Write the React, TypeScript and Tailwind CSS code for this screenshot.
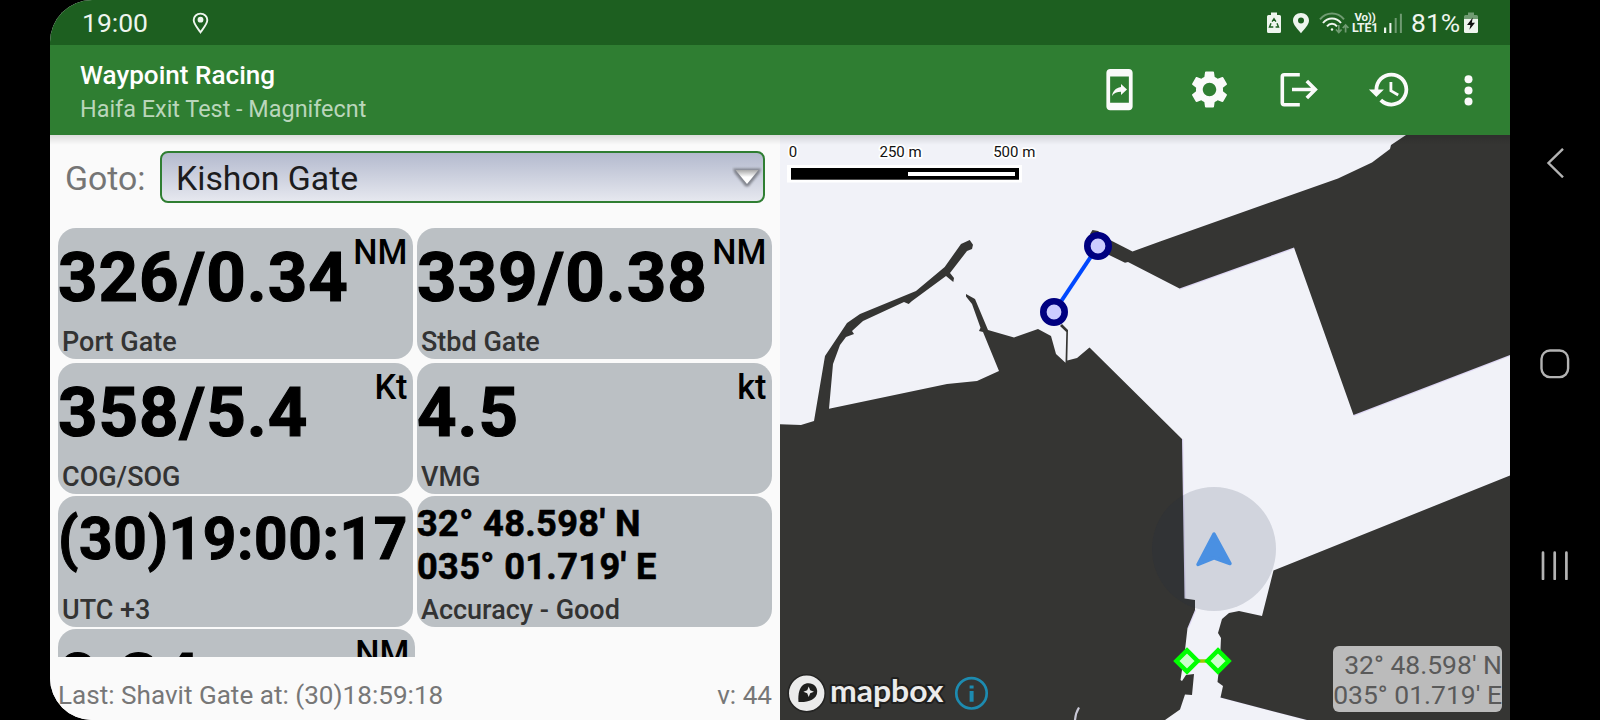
import type { ReactNode } from "react";
import { MdHistory, MdMobileScreenShare, MdSettings } from "react-icons/md";

function StatusBar() {
  return (
    <div className="flex h-[45px] shrink-0 items-center bg-[#1d5f20] pl-8 text-[26.5px] leading-[46px] text-[#eef5ee]">
      <span className="w-[110px]">19:00</span>
      <svg className="h-[22px] w-[17px]" viewBox="0 0 17 22" fill="none">
        <path d="M8.5 1.6C4.7 1.6 1.7 4.4 1.7 8.1c0 4.2 4.6 8.9 6.8 12.1 2.200-3.200 6.800-7.900 6.800-12.100C15.300 4.400 12.300 1.600 8.500 1.600Z" stroke="#eef5ee" strokeWidth="1.9" />
        <circle cx="8.500" cy="7.700" r="2.900" fill="#eef5ee" />
      </svg>
      <div className="ml-auto flex items-center pr-8">
        <svg className="h-6 w-[14px]" viewBox="0 0 14 24">
          <path d="M4 1.500h6V4H12.500Q14 4 14 5.500V20.500Q14 22 12.500 22H1.500Q0 22 0 20.500V5.500Q0 4 1.500 4H4Z" fill="#eef5ee" />
          <path d="M5.100 10.600 7 7.800l1.900 2.800M10 12.300l1.500 3.700H8.600M6.300 16H2.500L4 12.300" stroke="#1d5f20" strokeWidth="1.400" fill="none" />
        </svg>
        <svg className="ml-3 h-6 w-4" viewBox="0 0 16 24">
          <path fillRule="evenodd" d="M8 2C3.600 2 0 5.200 0 9.400 0 13.800 5 18.200 8 22.200c3-4 8-8.400 8-12.800C16 5.200 12.400 2 8 2Zm0 4.400a3 3 0 1 1 0 6 3 3 0 0 1 0-6Z" fill="#eef5ee" />
        </svg>
        <svg className="ml-[10px] h-6 w-[31px]" viewBox="0 0 31 24" fill="none" stroke="#eef5ee" strokeWidth="2">
          <path d="M1 8.300C7.500 .6 18.500 .6 25 8.300" opacity=".4" />
          <path d="M4 12c4.800-6 13.200-6 18 0M8 15.300c2.800-3.400 7.200-3.400 10 0" />
          <circle cx="13" cy="18.500" r="1.200" fill="#eef5ee" stroke="none" />
          <path d="M19.800 14v7M17 18.500l2.800 3 2.800-3M26.600 21.500v-7M23.800 17l2.800-3 2.800 3" opacity=".4" strokeWidth="1.700" />
        </svg>
        <div className="ml-[2px] w-[26px] text-center font-bold tracking-[-0.2px]">
          <div className="text-[11.5px] leading-[11px]">Vo))</div>
          <div className="text-[12.3px] leading-[11px]">LTE1</div>
        </div>
        <svg className="ml-[5px] h-6 w-[20px]" viewBox="0 0 20 24" fill="#eef5ee">
          <path d="M1 16.500h2.200V22H1zM6.400 12h2v10h-2z" />
          <path d="M11.700 7h2v15h-2zM16.900 2.800h2V22h-2z" opacity=".4" />
        </svg>
        <span className="ml-2 w-[53px]">81%</span>
        <svg className="h-6 w-[14px]" viewBox="0 0 14 24">
          <path d="M4 1.500h6V4H12.500Q14 4 14 5.500V8H0V5.500Q0 4 1.500 4H4Z" fill="#eef5ee" opacity=".4" />
          <path d="M0 8H14V20.500Q14 22 12.500 22H1.500Q0 22 0 20.500Z" fill="#eef5ee" />
          <path d="M8.800 6.500 3 14h3.400l-1 4.800L11 11.800H7.800Z" fill="#111" />
        </svg>
      </div>
    </div>
  );
}

function AppBar() {
  return (
    <div className="flex h-[90px] shrink-0 items-start bg-[#2f7e32] pl-[30px] pr-[35px] text-[#fafafa]">
      <div className="pt-[15px]">
        <h1 className="text-[26.1px] leading-[30px] font-medium text-white">Waypoint Racing</h1>
        <p className="mt-[2px] text-[23.4px] leading-[34px] text-[#bad6bb]">Haifa Exit Test - Magnifecnt</p>
      </div>
      <div className="ml-auto flex items-center gap-[45px] pt-[22px]">
        <MdMobileScreenShare size={45} />
        <MdSettings size={45} />
        <svg className="size-[45px]" viewBox="0 0 45 45" fill="none" stroke="currentColor" strokeWidth="3.600">
          <path d="M22.800 7.800H7.200Q5.300 7.800 5.300 9.700V35.800Q5.300 37.700 7.200 37.700H22.800M15 22.500H39M29.800 14l8.500 8.500-8.500 8.500" />
        </svg>
        <MdHistory size={45} />
        <svg className="h-[45px] w-[18px]" viewBox="0 0 18 45" fill="currentColor">
          <circle cx="11.500" cy="12.300" r="4" />
          <circle cx="11.500" cy="23.500" r="4" />
          <circle cx="11.500" cy="34.600" r="4" />
        </svg>
      </div>
    </div>
  );
}

function Tile({ children, unit, label, wide }: { children: ReactNode; unit?: string; label?: string; wide?: boolean }) {
  return (
    <div className={`h-[131px] overflow-hidden rounded-[18px] bg-[#bbc0c4] whitespace-nowrap ${wide ? "w-[357px]" : "w-[355px]"}`}>
      <div className="flex h-[99px] justify-between text-black">
        {children}
        {unit && <span className="pr-[5.5px] text-[34.200px] leading-[49px] font-medium">{unit}</span>}
      </div>
      {label && <div className="pl-1 text-[27px] leading-[31px] font-medium text-[#333]">{label}</div>}
    </div>
  );
}

function Big({ children }: { children: ReactNode }) {
  return <span className="text-[69px] leading-[99px] font-bold tracking-[0.95px] [-webkit-text-stroke:1.2px_#000]">{children}</span>;
}

function Dashboard() {
  return (
    <div className="flex w-[730px] shrink-0 flex-col bg-[#fafafa] px-2 pt-4">
      <div className="flex h-[52px] items-center pl-[7px] text-[33.8px] leading-[54px]">
        <span className="w-[95px] pt-[3px] text-[#757575]">Goto:</span>
        <div className="flex h-[52px] w-[605px] items-center rounded-[8px] border-2 border-[#2f7e32] bg-linear-to-b from-[#b4bace] to-[#e6e8ef] pl-[14px] text-[#1c1c1e]">
          <span className="pt-[3px]">Kishon Gate</span>
          <svg className="mt-px mr-px ml-auto h-6 w-[30px]" viewBox="0 0 30 24">
            <defs>
              <linearGradient id="arrow-shade" x1="0" y1="0" x2="0" y2="1">
                <stop offset="0" stopColor="#a8a8a8" />
                <stop offset=".5" stopColor="#ffffff" />
              </linearGradient>
              <filter id="arrow-blur" x="-20%" y="-20%" width="140%" height="140%">
                <feGaussianBlur stdDeviation="1.100" />
              </filter>
            </defs>
            <path d="M1 2.500H29L27.500 7 16.500 20.500H13.500L2.500 7Z" fill="#6f727a" opacity=".8" filter="url(#arrow-blur)" />
            <path d="M3.500 4H26.500L15 18Z" fill="url(#arrow-shade)" />
          </svg>
        </div>
      </div>
      <div className="mt-[25px] h-[429px] overflow-hidden">
        <div className="flex gap-1">
          <Tile unit="NM" label="Port Gate"><Big>326/0.34</Big></Tile>
          <Tile unit="NM" label="Stbd Gate"><Big>339/0.38</Big></Tile>
        </div>
        <div className="mt-1 flex gap-1">
          <Tile unit="Kt" label="COG/SOG"><Big>358/5.4</Big></Tile>
          <Tile unit="kt" label="VMG"><Big>4.5</Big></Tile>
        </div>
        <div className="mt-[2px] flex gap-1">
          <Tile label="UTC +3">
            <span className="text-[58.5px] leading-[87px] font-bold tracking-[0.62px] [-webkit-text-stroke:1px_#000]">(30)19:00:17</span>
          </Tile>
          <Tile label="Accuracy - Good">
            <div className="pt-[6px] text-[36.2px] leading-[43px] font-bold tracking-[0.35px] [-webkit-text-stroke:0.6px_#000]">
              <div>32° 48.598' N</div>
              <div>035° 01.719' E</div>
            </div>
          </Tile>
        </div>
        <div className="mt-[2px]">
          <Tile unit="NM" wide><Big>0.34</Big></Tile>
        </div>
      </div>
      <div className="mt-[18px] flex justify-between text-[26.1px] leading-[40px] text-[#777]">
        <span>Last: Shavit Gate at: (30)18:59:18</span>
        <span>v: 44</span>
      </div>
    </div>
  );
}

const LAND = [
  "780,424.300 801,425 814,421 825,356 847,323 860,314 916,291 944.700,267 961,244 969.700,240 973,244.700 972,249 967,251 950,273 954,278 953.300,282 946,276 912,301 908.700,304 904,302 863,321 852,331 854,334 846,337 840,345 833,364 829,408.700 947,384 977,381 999,371 983,332 979,331 980.500,327.700 972,304 966,296.500 966,294 975,299 988,330 1014,337.500 1038,329 1051,336 1056,354 1065.500,362.700 1066.300,332 1060,326 1062,324 1068,330 1067.300,360.500 1077,358 1089.500,347.500 1182,439 1184.500,598.500 1195,600 1195,610 1187.500,628 1185,650 1180.500,680 1182,681 1186,675 1194,674 1192,695 1185,694.500 1180,709.500 1165,720 780,720",
  "1510,475.500 1273.500,570.500 1262,616 1239,611 1229,613 1222,619 1218,633 1221,638 1220,660 1217.500,682 1223,686 1220.500,697.500 1307,720 1510,720",
  "1406,135 1391,145 1390,149 1372,162.500 1338,178.500 1160,241.500 1132.500,251.500 1110,240 1098,231 1092.500,230 1090,234 1107,254 1125,262.700 1128,262 1179.500,288.500 1294,247.500 1353.500,415 1510,355 1510,135",
];

function MapView() {
  return (
    <div className="relative w-[730px] shrink-0 overflow-hidden">
      <svg className="block h-[585px] w-[730px]" viewBox="780 135 730 585">
        <rect x="780" y="135" width="730" height="585" fill="#f1f2f8" />
        <path d="M1179.500 289 1294 248M1353.500 415.500 1510 355.500M1182.500 439 1185 598.500M1195.500 610 1188 628M1220.500 697 1307 719.500" stroke="#ddd6f3" strokeWidth="1.500" fill="none" />
        {LAND.map((points) => (
          <polygon key={points} points={points} fill="#353533" />
        ))}
        <path d="M1079 707.500Q1075.500 713 1075 720" stroke="#c9c8d6" strokeWidth="2.200" fill="none" />
        <circle cx="1214" cy="549" r="62" fill="rgb(26 42 70)" fillOpacity=".148" />
        <path d="M1214 534 1198 564.500 1214 557.800 1230 563.500Z" fill="#4a90e2" stroke="#4a90e2" strokeWidth="3.500" strokeLinejoin="round" />

        <path d="M1054 312 1098 246" stroke="#0048ff" strokeWidth="4" />
        <g fill="#ccccff" stroke="#000080" strokeWidth="6.600">
          <circle cx="1054" cy="312" r="10.700" />
          <circle cx="1098" cy="246" r="10.700" />
        </g>
        <path d="M1187 661H1218" stroke="#99cc00" strokeWidth="3.500" />
        <g fill="#ccffcc" stroke="#00ff00" strokeWidth="4.500">
          <path d="M1187 650.400 1197.600 661 1187 671.600 1176.400 661Z" />
          <path d="M1218 650.400 1228.600 661 1218 671.600 1207.400 661Z" />
        </g>

        <rect x="787" y="165" width="235" height="17.500" fill="#fff" />
        <rect x="791" y="168" width="228" height="11.700" fill="#000" />
        <rect x="908" y="172" width="107" height="4" fill="#fff" />
        <g className="font-['Roboto'] text-[15px]" fill="#111" stroke="#fff" strokeWidth="3.500" strokeLinejoin="round" paintOrder="stroke">
          <text x="788.800" y="157">0</text>
          <text x="879.500" y="157">250 m</text>
          <text x="993.200" y="157">500 m</text>
        </g>

        <circle cx="806.700" cy="693.300" r="18.500" fill="#ebebeb" stroke="#242423" strokeWidth="1.600" />
        <path d="M798.500 702C797.700 694 799.500 683.300 808.500 683.300 814 683.300 817.200 687.300 817.200 691.500 817.200 700 806.500 702.700 798.500 702Z" fill="#1f1f1e" />
        <path d="M808.700 686.500 810.200 690.300 814 691.800 810.200 693.300 808.700 697.100 807.200 693.300 803.400 691.800 807.200 690.300Z" fill="#ebebeb" />
        <text x="830" y="701.500" textLength="113.500" lengthAdjust="spacingAndGlyphs" className="font-['Lato'] text-[29.500px] font-bold" fill="#ebebeb" stroke="#20201f" strokeWidth="4" strokeLinejoin="round" paintOrder="stroke">mapbox</text>
        <circle cx="971.500" cy="693.300" r="15.200" fill="none" stroke="#1d8bb0" strokeWidth="2.700" />
        <path d="M969.600 685.600h4v3h-4zM969.600 691h4v10.700h-4z" fill="#1d8bb0" />
      </svg>
      <div className="absolute right-2 bottom-2 h-[66px] w-[169px] rounded-[6px] bg-[#bbb] pt-[3.500px] text-right text-[26.500px] leading-[30px] whitespace-nowrap text-[#5a5a5a]">
        <div>32° 48.598' N</div>
        <div>035° 01.719' E</div>
      </div>
    </div>
  );
}

function NavBar() {
  return (
    <div className="flex w-[90px] shrink-0 flex-col items-center gap-[171px] bg-black pt-[147.5px] pr-px text-[#b3b3b3]">
      <svg className="size-[30px] shrink-0" viewBox="0 0 30 30" fill="none" stroke="currentColor" strokeWidth="2.400">
        <path d="M23 .8 8.500 15 23 29.300" />
      </svg>
      <svg className="size-[30px] shrink-0" viewBox="0 0 30 30" fill="none" stroke="currentColor" strokeWidth="2.400">
        <rect x="1.500" y="1.500" width="26.600" height="26.600" rx="8.500" />
      </svg>
      <svg className="size-[30px] shrink-0" viewBox="0 0 30 30" stroke="currentColor" strokeWidth="2.700" strokeLinecap="round">
        <path d="M3 2.700V29M14.700 2.700V29M26.400 2.700V29" />
      </svg>
    </div>
  );
}

export default function App() {
  return (
    <div className="flex h-[720px] w-[1600px] overflow-hidden bg-black pl-[50px] font-['Roboto',sans-serif]">
      <div className="flex w-[1460px] shrink-0 flex-col overflow-hidden rounded-l-[42px] bg-[#fafafa]">
        <StatusBar />
        <AppBar />
        <div className="relative flex h-[585px]">
          <Dashboard />
          <MapView />
          <div className="absolute inset-x-0 top-0 h-[10px] bg-linear-to-b from-black/12 to-transparent" />
        </div>
      </div>
      <NavBar />
    </div>
  );
}
